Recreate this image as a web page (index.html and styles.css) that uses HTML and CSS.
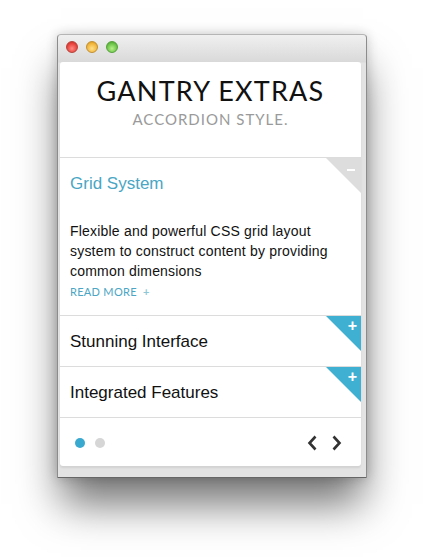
FILE: index.html
```html
<!DOCTYPE html>
<html>
<head>
<meta charset="utf-8">
<link rel="stylesheet" href="styles.css">
</head>
<body>
<div class="window">
  <div class="titlebar">
    <span class="light red"></span>
    <span class="light yellow"></span>
    <span class="light green"></span>
  </div>
  <div class="card">
    <header class="head">
      <h1 class="title">GANTRY EXTRAS</h1>
      <p class="subtitle">ACCORDION STYLE.</p>
    </header>
    <section class="item open">
      <span class="corner corner-grey"><span class="minus"></span></span>
      <h2 class="item-title active">Grid System</h2>
      <p class="item-text">Flexible and powerful CSS grid layout system to construct content by providing common dimensions</p>
      <a class="more">READ MORE <span class="more-plus">+</span></a>
    </section>
    <section class="item">
      <span class="corner corner-blue"><span class="plus">+</span></span>
      <h2 class="item-title">Stunning Interface</h2>
    </section>
    <section class="item">
      <span class="corner corner-blue"><span class="plus">+</span></span>
      <h2 class="item-title">Integrated Features</h2>
    </section>
    <footer class="nav">
      <div class="dots">
        <span class="dot dot-on"></span>
        <span class="dot"></span>
      </div>
      <div class="arrows">
        <svg class="arrow" width="12" height="18" viewBox="0 0 12 18"><path d="M9.5 2.5 L3.5 9 L9.5 15.5" fill="none" stroke="#333" stroke-width="2.6"/></svg>
        <svg class="arrow" width="12" height="18" viewBox="0 0 12 18"><path d="M2.5 2.5 L8.5 9 L2.5 15.5" fill="none" stroke="#333" stroke-width="2.6"/></svg>
      </div>
    </footer>
  </div>
</div>
</body>
</html>
```

FILE: styles.css
```css
html, body {
  margin: 0;
  padding: 0;
  background: #fff;
}
body {
  min-height: 557px;
  box-sizing: border-box;
  padding: 34px 0 0 57px;
  font-family: "Liberation Sans", Arial, sans-serif;
}
.window {
  width: 310px;
  height: 444px;
  box-sizing: border-box;
  border: 1px solid #8c8c8c;
  border-top-color: #b5b5b5;
  border-bottom-color: #666;
  border-radius: 4px 4px 1px 1px;
  background: linear-gradient(#f0f0f0 0, #d9d9d9 27px, #e3e3e3 28px, #e3e3e3 100%);
  box-shadow: 0 30px 40px -4px rgba(0,0,0,0.55), 0 0 12px rgba(0,0,0,0.2);
  padding: 0 5px 0 2px;
  display: flex;
  flex-direction: column;
}
.titlebar {
  height: 27px;
  display: flex;
  align-items: center;
  gap: 8px;
  padding-left: 6px;
  flex: none;
}
.light {
  width: 12px;
  height: 12px;
  border-radius: 50%;
  box-sizing: border-box;
  margin-top: -3px;
}
.red { background: radial-gradient(circle at 50% 65%, #ff8a84 0, #e8433c 60%, #b52a24 100%); border: 1px solid #b8413a; }
.yellow { background: radial-gradient(circle at 50% 65%, #ffe08a 0, #f2b63c 60%, #c48a1c 100%); border: 1px solid #c39030; }
.green { background: radial-gradient(circle at 50% 65%, #b8f08a 0, #6cc448 60%, #3f8f26 100%); border: 1px solid #55a23a; }

.card {
  background: #fff;
  height: 404px;
  border-radius: 3px;
  box-shadow: 0 2px 2px rgba(0,0,0,0.08);
  display: flex;
  flex-direction: column;
  overflow: hidden;
}
.head {
  height: 96px;
  box-sizing: border-box;
  border-bottom: 1px solid #dcdcdc;
  text-align: center;
  padding-top: 13px;
}
.title {
  margin: 0;
  font-family: "Lato", sans-serif;
  font-weight: 400;
  font-size: 27px;
  line-height: 32px;
  letter-spacing: 1.2px;
  color: #111;
}
.subtitle {
  margin: 3px 0 0;
  font-family: "Lato", sans-serif;
  font-size: 15px;
  line-height: 18px;
  letter-spacing: 1px;
  color: #9a9a9a;
}
.item {
  position: relative;
  height: 51px;
  box-sizing: border-box;
  border-bottom: 1px solid #dcdcdc;
  padding: 0 10px;
}
.item.open {
  height: 158px;
}
.item-title {
  margin: 0;
  font-weight: 400;
  font-size: 17px;
  line-height: 51px;
  color: #111;
}
.item-title.active {
  color: #4aa6c4;
  line-height: 52px;
}
.item-text {
  margin: 11px 0 0;
  font-size: 14px;
  line-height: 20px;
  letter-spacing: 0.2px;
  color: #111;
  padding-right: 8px;
}
.more {
  display: block;
  margin-top: 4px;
  font-family: "Lato", sans-serif;
  font-size: 11px;
  line-height: 14px;
  letter-spacing: 0.3px;
  color: #4aa6c4;
}
.more-plus {
  margin-left: 3px;
  color: #8fc6d8;
  font-weight: 700;
}
.corner {
  position: absolute;
  top: 0;
  right: 0;
  width: 35px;
  height: 35px;
  clip-path: polygon(0 0, 100% 0, 100% 100%);
}
.corner-grey { background: #dddddd; }
.corner-blue { background: #3fb0d2; }
.minus {
  position: absolute;
  right: 6px;
  top: 11px;
  width: 8px;
  height: 2px;
  background: #fff;
}
.plus {
  position: absolute;
  right: 4px;
  top: 2px;
  color: #fff;
  font-size: 16px;
  font-weight: 700;
  line-height: 16px;
}
.nav {
  flex: 1;
  display: flex;
  align-items: center;
  justify-content: space-between;
  padding: 0 18px 0 15px;
}
.dots {
  display: flex;
  gap: 10px;
  margin-top: 1px;
}
.dot {
  width: 10px;
  height: 10px;
  border-radius: 50%;
  background: #d6d6d6;
}
.dot-on {
  background: #3aa9d0;
}
.arrows {
  display: flex;
  gap: 13px;
  margin-top: 1px;
}
.arrow {
  display: block;
}
```
